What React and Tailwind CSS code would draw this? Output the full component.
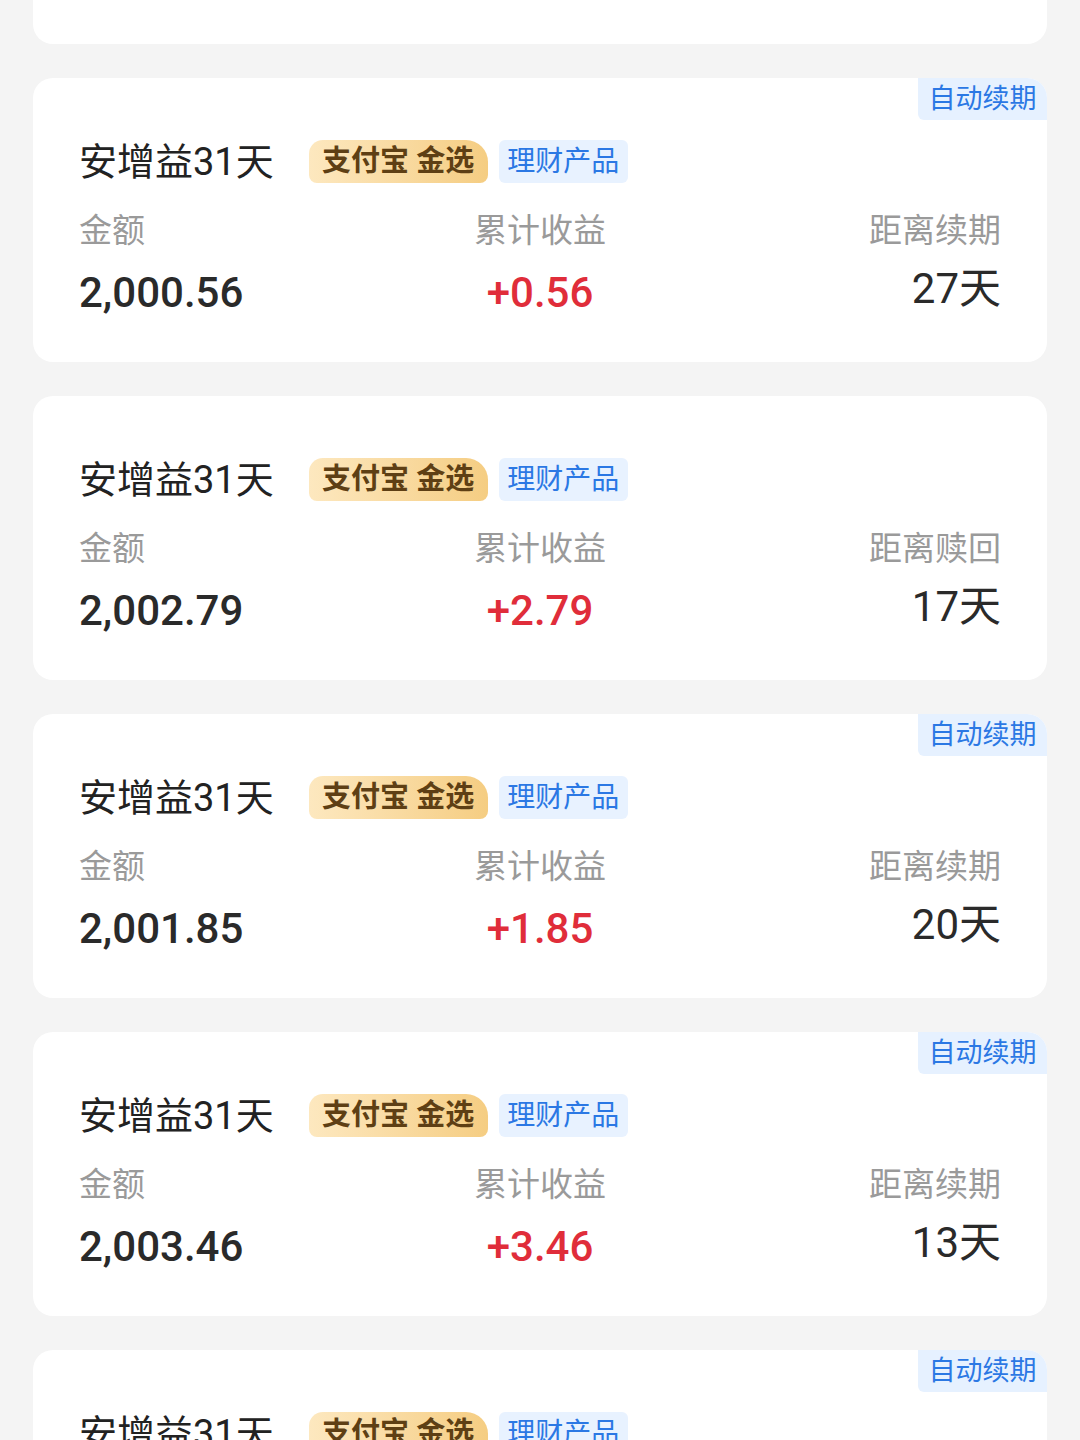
import React from 'react'

// Holdings list data
const holdings = [
  { amount: '2,000.56', gain: '+0.56', label: '距离续期', days: '27天', auto: true },
  { amount: '2,002.79', gain: '+2.79', label: '距离赎回', days: '17天', auto: false },
  { amount: '2,001.85', gain: '+1.85', label: '距离续期', days: '20天', auto: true },
  { amount: '2,003.46', gain: '+3.46', label: '距离续期', days: '13天', auto: true },
  { amount: '2,000.00', gain: '+0.00', label: '距离续期', days: '30天', auto: true },
]

const font = { fontFamily: 'Roboto, "Noto Sans CJK SC", "Noto Sans", sans-serif' }

function HoldingCard({ item }) {
  return (
    <div className="relative overflow-hidden rounded-[20px] bg-white px-[46px] pt-[62px] pb-[45px]">
      {item.auto && (
        <div className="absolute right-0 top-0 flex h-[42px] w-[129px] items-center justify-center rounded-bl-[6px] bg-[#e6f1ff] text-[27px] text-[#2b78e4]">
          自动续期
        </div>
      )}

      {/* Title + tags */}
      <div className="flex h-[43px] items-center">
        <span className="text-[38px] leading-none text-[#222]">安增益31天</span>
        <span className="ml-[35px] flex h-[43px] w-[179px] items-center justify-center rounded-tl-[14px] rounded-bl-[8px] rounded-tr-[22px] rounded-br-[8px] bg-gradient-to-r from-[#fde8bf] to-[#f5cd82] text-[29px] font-bold text-[#5e3f14]">
          支付宝 金选
        </span>
        <span className="ml-[11px] flex h-[43px] w-[129px] items-center justify-center rounded-[6px] bg-[#e8f2ff] text-[28px] text-[#2b78e4]">
          理财产品
        </span>
      </div>

      {/* Labels */}
      <div className="mt-[28px] grid grid-cols-3 text-[33px] leading-[40px] text-[#9a9a9a]">
        <span className="text-left">金额</span>
        <span className="text-center">累计收益</span>
        <span className="text-right">{item.label}</span>
      </div>

      {/* Values */}
      <div className="mt-[18px] grid grid-cols-3 text-[42px] font-medium leading-[48px]">
        <span className="text-left text-[#2a2a2a]">{item.amount}</span>
        <span className="text-center text-[#e02d3a]">{item.gain}</span>
        <span className="-mt-[4px] text-right font-normal text-[#2a2a2a]">{item.days}</span>
      </div>
    </div>
  )
}

export default function App() {
  return (
    <div className="h-[1440px] overflow-hidden bg-[#f4f4f4]" style={font}>
      <div className="flex flex-col gap-[34px] px-[33px]">
        {/* Partially visible card above */}
        <div className="-mt-[240px] h-[284px] rounded-[20px] bg-white" />
        {holdings.map((item, i) => (
          <HoldingCard key={i} item={item} />
        ))}
      </div>
    </div>
  )
}
